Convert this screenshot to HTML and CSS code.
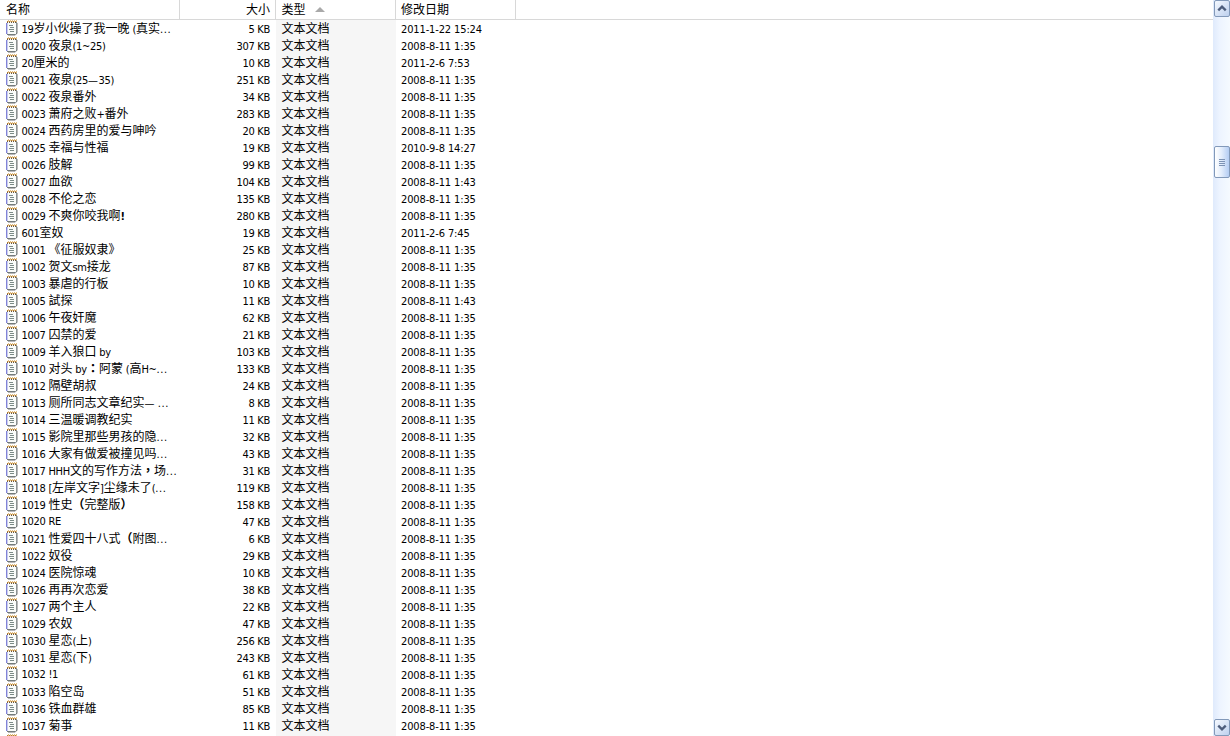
FILE: index.html
```
<!DOCTYPE html>
<html lang="zh-CN">
<head>
<meta charset="utf-8">
<title>文件列表</title>
<link rel="stylesheet" href="styles.css">
</head>
<body>
<svg class="defs" width="0" height="0" aria-hidden="true">
  <symbol id="note" viewBox="0 0 12 16">
    <path d="M2 15.500h7l2.500-2.500V3" fill="none" stroke="#b9b9b9"/>
    <path d="M1 2h10v11l-1.500 1.500H1z" fill="#fafcfa"/>
    <path d="M10.500 2v11" stroke="#8b9292"/>
    <path d="M1 14.500h8.500l1.500-1.500" fill="none" stroke="#737a7a"/>
    <path d="M.5 3v11" stroke="#8184d8"/>
    <path d="M1.500 3v11" stroke="#c9cbed"/>
    <path d="M1 1.500h10" stroke="#e6c68c"/>
    <path d="M1 1.500h10" stroke="#b87f35" stroke-dasharray="1 1"/>
    <path d="M2 .5h9" stroke="#e0bd80" stroke-dasharray="1 1"/>
    <path d="M1 2.500h10" stroke="#6b5940" stroke-dasharray="1 1"/>
    <path d="M3 5.500h4M4 7.500h4M3 9.500h5M4 11.500h4" stroke="#7c8b87"/>
  </symbol>
</svg>
<div class="window">
  <main class="list">
    <div class="row header">
      <div class="name"><span class="cjk">名称</span></div>
      <div class="size"><span class="cjk">大小</span></div>
      <div class="type"><span class="cjk">类型</span><i class="sort"></i></div>
      <div class="date"><span class="cjk">修改日期</span></div>
    </div>
    <div id="rows"></div>
  </main>
  <aside class="scrollbar">
    <div class="button"><svg width="15" height="15" viewBox="0 0 15 15"><path d="M3.500 9.500l4-4 4 4" fill="none" stroke="#4d5d7c" stroke-width="2.500"/></svg></div>
    <div class="before"></div>
    <div class="thumb"><i></i><i></i><i></i><i></i></div>
    <div class="after"></div>
    <div class="button"><svg width="15" height="15" viewBox="0 0 15 15"><path d="M3.500 5.500l4 4 4-4" fill="none" stroke="#4d5d7c" stroke-width="2.500"/></svg></div>
  </aside>
</div>
<script src="script.js"></script>
</body>
</html>
```
FILE: styles.css
```
* { box-sizing: border-box; }
body { margin: 0; background: #fff; color: #000; font: 11px/17px "DejaVu Sans Condensed", "Noto Sans CJK SC", sans-serif; letter-spacing: -.28px; }
.defs { display: block; position: absolute; }
.window { display: flex; width: 1230px; height: 736px; overflow: hidden; }
.list { flex: 1; height: 736px; overflow: hidden; }
.row { display: grid; grid-template-columns: 180px 96px 120px 120px; height: 17px; white-space: pre; }
.row > div { height: 17px; display: flex; align-items: center; }
.row .name { padding-left: 6px; }
.row .size { justify-content: flex-end; padding-right: 6px; }
.row .size, .row .date { padding-top: 1px; }
.row .type { padding: 0 0 1px 5.5px; background: #f6f6f6; }
.row .date { padding-left: 5px; letter-spacing: -.13px; }
.text { display: block; height: 17px; line-height: 17px; }
.cjk { font-family: "Noto Sans CJK SC", sans-serif; font-size: 12px; line-height: 16px; letter-spacing: 0; }
.mid { font-family: "Noto Sans CJK TC", sans-serif; font-weight: 700; }
.wide { letter-spacing: .5px; }
.dots { letter-spacing: .6px; }
.note { width: 12px; height: 16px; margin: -1px 3.5px 0 0; flex: none; }
.row.header { height: 20px; border-bottom: 1px solid #d8d8d8; }
.header > div { height: 19px; border-right: 1px solid #d8d8d8; }
.row.header > div { padding-top: 0; padding-bottom: 1px; }
.row.header .type { background: #fff; }
.row.header .size { padding-right: 5px; }
.sort { margin: 1px 0 0 9px; border: 5px solid transparent; border-top: 0; border-bottom-color: #a9a9a9; }
.scrollbar { width: 17px; height: 736px; display: flex; flex-direction: column; background: linear-gradient(90deg, #dfeafc, #edf4ff 40%, #f5faff); }
.button { height: 17px; margin-left: 1px; border: 1px solid #8299b9; border-radius: 2px; background: linear-gradient(135deg, #f5f9ff, #bdd0ee); }
.button svg { display: block; width: 14px; height: 15px; }
.before { height: 129px; }
.thumb { height: 32px; margin-left: 1px; border: 1px solid #8299b9; border-radius: 2px; background: linear-gradient(90deg, #fff, #e4eefc 45%, #b4cdf3); display: flex; flex-direction: column; align-items: center; justify-content: center; gap: 1px; }
.thumb i { width: 6px; height: 1px; background: #7d93b5; }
.after { flex: 1; }
```
FILE: script.js
```
const files = `19岁小伙操了我一晚 (真实...|5|2011-1-22 15:24
0020 夜泉(1~25)|307
20厘米的|10|2011-2-6 7:53
0021 夜泉(25—35)|251
0022 夜泉番外|34
0023 萧府之败+番外|283
0024 西药房里的爱与呻吟|20
0025 幸福与性福|19|2010-9-8 14:27
0026 肢解|99
0027 血欲|104|2008-8-11 1:43
0028 不伦之恋|135
0029 不爽你咬我啊!|280
601室奴|19|2011-2-6 7:45
1001 《征服奴隶》|25
1002 贺文sm接龙|87
1003 暴虐的行板|10
1005 試探|11|2008-8-11 1:43
1006 午夜奸魔|62
1007 囚禁的爱|21
1009 羊入狼口 by|103
1010 对头 by：阿蒙 (高H~...|133
1012 隔壁胡叔|24
1013 厕所同志文章纪实— ...|8
1014 三温暖调教纪实|11
1015 影院里那些男孩的隐...|32
1016 大家有做爱被撞见吗...|43
1017 HHH文的写作方法，场...|31
1018 [左岸文字]尘缘未了(...|119
1019 性史（完整版）|158
1020 RE|47
1021 性爱四十八式（附图...|6
1022 奴役|29
1024 医院惊魂|10
1026 再再次恋爱|38
1027 两个主人|22
1029 农奴|47
1030 星恋(上)|256
1031 星恋(下)|243
1032 !1|61
1033 陷空岛|51
1036 铁血群雄|85
1037 菊亊|11`.split("\n");

// Ideographs are set one size larger than the Latin text beside them;
// full-width colons and commas are centred in their cell.
const mixed = s => s
  .replace(/[\u3000-\u9fff\uff00-\uffef]+/g, run =>
    '<span class="cjk">' + run.replace(/[：，（）]/g, '<span class="mid" lang="zh-TW">$&</span>') + '</span>')
  .replace("啊</span>!", '啊</span><b>!</b>')
  .replace("—", '<span class="wide">—</span>')
  .replace("...", '<span class="dots">...</span>');
const icon = '<svg class="note"><use href="#note"/></svg>';

document.getElementById("rows").innerHTML = files.map(line => {
  const [name, size, date = "2008-8-11 1:35"] = line.split("|");
  return `<div class="row"><div class="name">${icon}<span class="text">${mixed(name)}</span></div>`
    + `<div class="size">${size} KB</div>`
    + `<div class="type"><span class="cjk">文本文档</span></div>`
    + `<div class="date">${date}</div></div>`;
}).join("") + `<div class="row"><div class="name">${icon}</div><div></div><div class="type"></div></div>`;
```
